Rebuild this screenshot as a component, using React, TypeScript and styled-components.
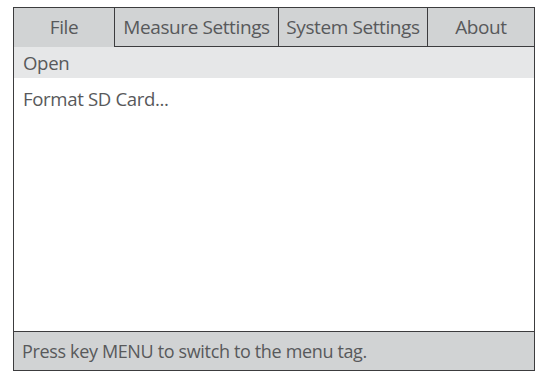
import React from 'react';
import styled, { createGlobalStyle } from 'styled-components';

const GlobalStyle = createGlobalStyle`
  html, body {
    margin: 0;
    padding: 0;
    background: #ffffff;
  }
  body {
    font-family: 'Open Sans', 'Noto Sans', sans-serif;
    color: #58595b;
  }
`;

const Page = styled.div`
  padding: 7px 0 0 13px;
`;

const Frame = styled.div`
  box-sizing: border-box;
  width: 522px;
  height: 364px;
  border: 1px solid #3c3c3e;
  display: flex;
  flex-direction: column;
  background: #ffffff;
`;

const TabBar = styled.div`
  display: flex;
  height: 39px;
  background: #d1d3d4;
`;

const Tab = styled.div<{ $width: number; $active?: boolean; $first?: boolean }>`
  box-sizing: border-box;
  flex: 0 0 ${(p) => p.$width}px;
  display: flex;
  align-items: center;
  justify-content: center;
  font-size: 19px;
  letter-spacing: -0.4px;
  border-left: ${(p) => (p.$first ? 'none' : '1px solid #3c3c3e')};
  border-bottom: 1px solid ${(p) => (p.$active ? 'transparent' : '#3c3c3e')};
  padding-bottom: 1px;
`;

const MenuList = styled.div`
  flex: 1;
  display: flex;
  flex-direction: column;
`;

const MenuItem = styled.div<{ $selected?: boolean }>`
  height: ${(p) => (p.$selected ? 31 : 40)}px;
  display: flex;
  align-items: center;
  padding-left: 9px;
  font-size: 18.6px;
  letter-spacing: -0.35px;
  background: ${(p) => (p.$selected ? '#e6e7e8' : 'transparent')};
`;

const StatusBar = styled.div`
  box-sizing: border-box;
  height: 39px;
  border-top: 1px solid #3c3c3e;
  background: #d1d3d4;
  display: flex;
  align-items: center;
  padding-left: 8px;
  font-size: 18px;
  letter-spacing: -0.35px;
`;

const tabs = [
  { label: 'File', width: 100 },
  { label: 'Measure Settings', width: 164 },
  { label: 'System Settings', width: 149 },
  { label: 'About', width: 107 },
];

const items = ['Open', 'Format SD Card...'];

export default function App() {
  return (
    <>
      <GlobalStyle />
      <Page>
        <Frame>
          <TabBar>
            {tabs.map((t, i) => (
              <Tab key={t.label} $width={t.width} $first={i === 0} $active={i === 0}>
                {t.label}
              </Tab>
            ))}
          </TabBar>
          <MenuList>
            {items.map((label, i) => (
              <MenuItem key={label} $selected={i === 0}>
                {label}
              </MenuItem>
            ))}
          </MenuList>
          <StatusBar>Press key MENU to switch to the menu tag.</StatusBar>
        </Frame>
      </Page>
    </>
  );
}
